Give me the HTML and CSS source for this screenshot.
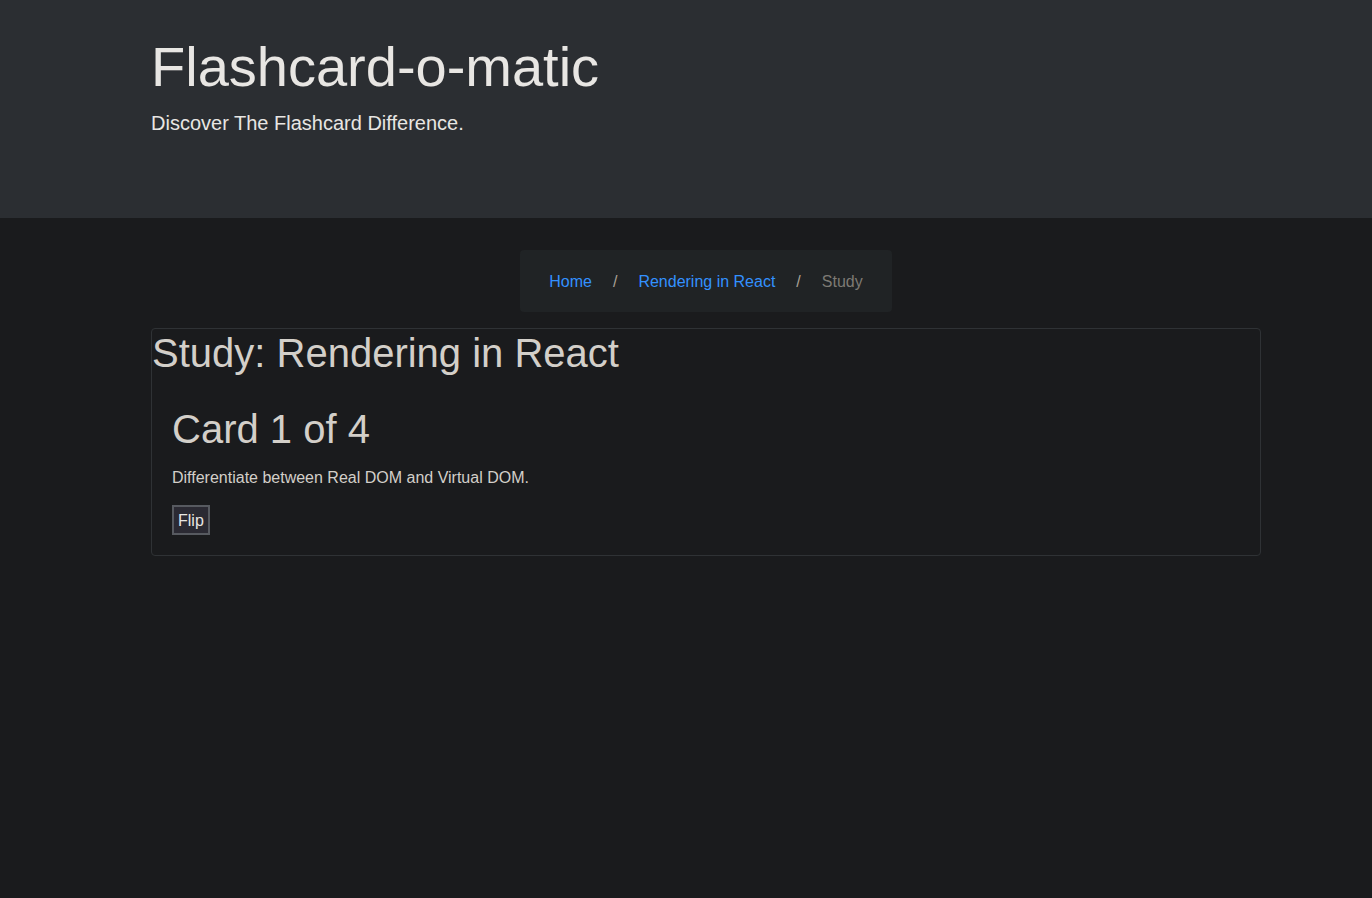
FILE: index.html
```html
<!DOCTYPE html>
<html lang="en">
<head>
<meta charset="utf-8">
<title>Flashcard-o-matic</title>
<link rel="stylesheet" href="styles.css">
</head>
<body>
<header class="jumbotron">
  <div class="container">
    <h1 class="display">Flashcard-o-matic</h1>
    <p class="lead">Discover The Flashcard Difference.</p>
  </div>
</header>
<main class="container">
  <nav class="crumbs-wrap">
    <ol class="breadcrumb">
      <li><a href="#">Home</a></li>
      <li class="sep">/</li>
      <li><a href="#">Rendering in React</a></li>
      <li class="sep">/</li>
      <li class="active">Study</li>
    </ol>
  </nav>
  <section class="card">
    <h1 class="study-title">Study: Rendering in React</h1>
    <div class="card-body">
      <h1 class="card-title">Card 1 of 4</h1>
      <p class="card-text">Differentiate between Real DOM and Virtual DOM.</p>
      <button class="flip" type="button">Flip</button>
    </div>
  </section>
</main>
</body>
</html>
```
FILE: styles.css
```css
* { box-sizing: border-box; }
html, body { margin: 0; padding: 0; }
body {
  background: #1a1b1d;
  color: #d3cfc9;
  font-family: "Liberation Sans", Arial, sans-serif;
  font-size: 16px;
  line-height: 1.5;
}
.container {
  width: 1110px;
  margin-left: 151px;
}
.jumbotron {
  background: #2b2e32;
  height: 218px;
  padding-top: 33px;
  margin-bottom: 32px;
}
.display {
  margin: 0 0 8px;
  font-size: 56px;
  font-weight: 300;
  line-height: 1.2;
  color: #e8e6e3;
}
.lead {
  margin: 0;
  font-size: 20px;
  font-weight: 300;
  color: #e8e6e3;
}
.crumbs-wrap {
  display: flex;
  justify-content: center;
  margin-bottom: 16px;
}
.breadcrumb {
  display: flex;
  gap: 21px;
  list-style: none;
  margin: 0;
  padding: 20px 29px 18px;
  background: #202325;
  border-radius: 4px;
  color: #a8a095;
}
.breadcrumb a {
  color: #3391ff;
  text-decoration: none;
}
.breadcrumb .sep { color: #a8a095; }
.breadcrumb .active { color: #7d7a74; }
.card {
  border: 1px solid #2f3235;
  border-radius: 4px;
}
.study-title {
  margin: 0 0 8px;
  font-size: 40px;
  font-weight: 500;
  line-height: 1.2;
  color: #d3cfc9;
}
.card-body {
  padding: 20px;
}
.card-title {
  margin: 0 0 12px;
  font-size: 40px;
  font-weight: 500;
  line-height: 1.2;
  color: #d3cfc9;
}
.card-text {
  margin: 0 0 16px;
  padding-top: 1px;
  height: 24px;
  color: #d3cfc9;
}
.flip {
  display: block;
  font-family: "Liberation Sans", Arial, sans-serif;
  font-size: 16px;
  line-height: 24px;
  padding: 2px 4px 0;
  border: 2px solid #575a60;
  background: #2b2a33;
  color: #e8e6e3;
}
```
